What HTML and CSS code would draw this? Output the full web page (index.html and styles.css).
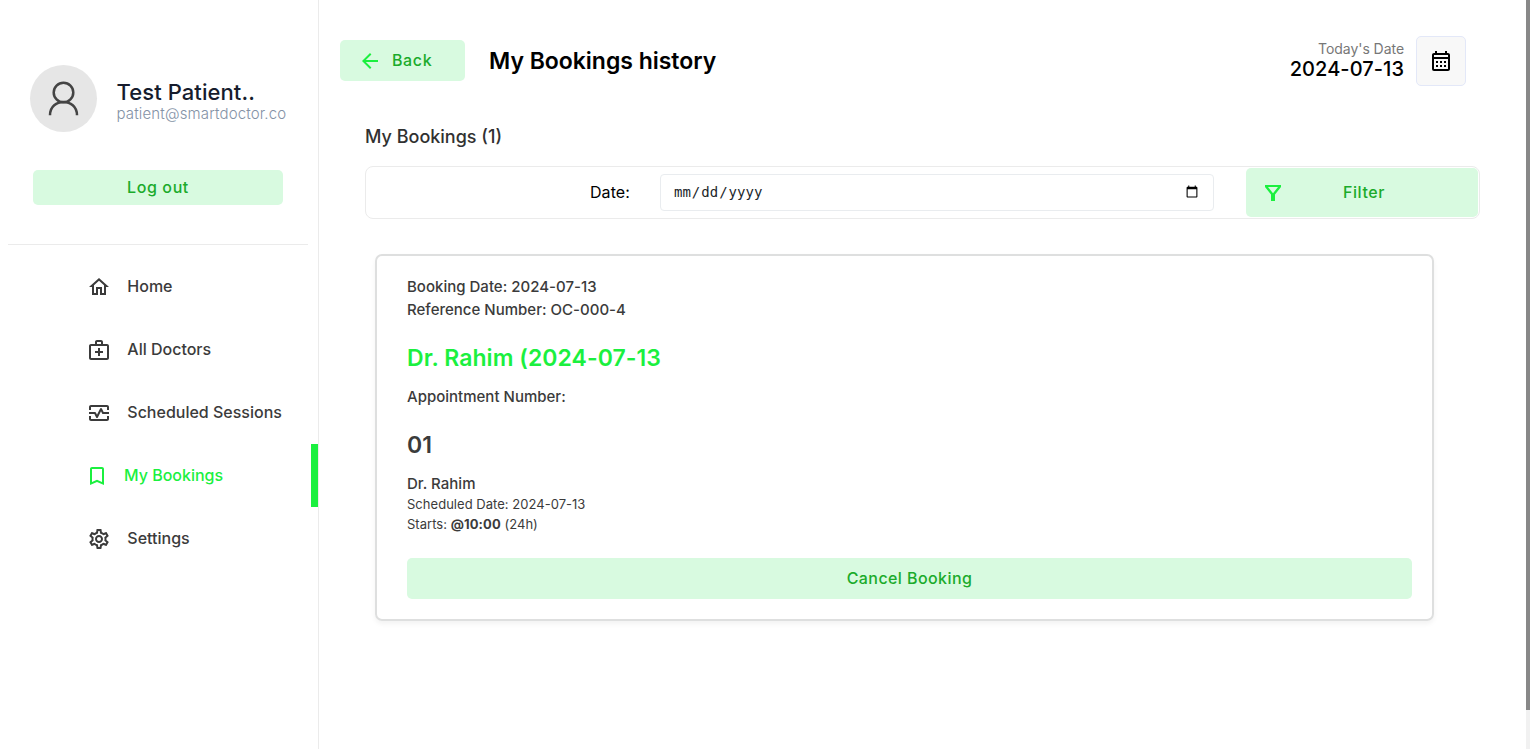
FILE: index.html
```html
<!DOCTYPE html>
<html lang="en">
<head>
<meta charset="utf-8">
<title>My Bookings</title>
<link rel="stylesheet" href="styles.css">
</head>
<body>
<div class="app">
  <aside class="sidebar">
    <div class="profile">
      <div class="avatar">
        <svg width="67" height="67" viewBox="0 0 67 67" fill="none" stroke="#444" stroke-width="2.5"><circle cx="33.5" cy="27.5" r="9.8"/><path d="M20 50.2C20 32.500 47 32.500 47 50.2"/></svg>
      </div>
      <div class="who"><p class="name">Test Patient..</p><p class="email">patient@smartdoctor.co</p></div>
    </div>
    <button class="btn logout">Log out</button>
    <hr class="divider">
    <nav class="menu">
      <a class="item"><svg class="icon" viewBox="0 0 24 24"><path d="M12 5.69l5 4.5V18h-2v-6H9v6H7v-7.81l5-4.5M12 3L2 12h3v8h6v-6h2v6h6v-8h3L12 3z"/></svg><span class="label">Home</span></a>
      <a class="item"><svg class="icon" viewBox="0 0 24 24"><path d="M20 6h-4V4c0-1.1-.9-2-2-2h-4c-1.1 0-2 .9-2 2v2H4c-1.1 0-2 .9-2 2v12c0 1.1.9 2 2 2h16c1.1 0 2-.9 2-2V8c0-1.1-.9-2-2-2zM10 4h4v2h-4V4zm10 16H4V8h16v12zM13 10h-2v3H8v2h3v3h2v-3h3v-2h-3z"/></svg><span class="label">All Doctors</span></a>
      <a class="item"><svg class="icon" viewBox="0 0 24 24"><path d="M20 4H4c-1.1 0-2 .9-2 2v3h2V6h16v3h2V6c0-1.1-.9-2-2-2zM20 18H4v-3H2v3c0 1.1.9 2 2 2h16c1.1 0 2-.9 2-2v-3h-2v3zM14.89 7.55c-.34-.68-1.45-.68-1.79 0L10 13.76l-1.11-2.21A.988.988 0 0 0 8 11H2v2h5.38l1.72 3.45c.18.34.52.55.9.55s.72-.21.89-.55L14 10.24l1.11 2.21c.17.34.51.55.89.55h6v-2h-5.38l-1.73-3.45z"/></svg><span class="label">Scheduled Sessions</span></a>
      <a class="item active"><svg class="icon" viewBox="0 0 24 24"><path d="M17 3H7c-1.1 0-2 .9-2 2v16l7-3 7 3V5c0-1.1-.9-2-2-2zm0 15l-5-2.18L7 18V5h10v13z"/></svg><span class="label">My Bookings</span></a>
      <a class="item"><svg class="icon" viewBox="0 0 24 24"><path d="M19.43 12.98c.04-.32.07-.64.07-.98 0-.34-.03-.66-.07-.98l2.11-1.65c.19-.15.24-.42.12-.64l-2-3.46c-.09-.16-.26-.25-.44-.25-.06 0-.12.01-.17.03l-2.49 1c-.52-.4-1.08-.73-1.69-.98l-.38-2.65C14.46 2.18 14.25 2 14 2h-4c-.25 0-.46.18-.49.42l-.38 2.65c-.61.25-1.17.59-1.69.98l-2.49-1c-.06-.02-.12-.03-.18-.03-.17 0-.34.09-.43.25l-2 3.46c-.13.22-.07.49.12.64l2.11 1.65c-.04.32-.07.65-.07.98 0 .33.03.66.07.98l-2.11 1.65c-.19.15-.24.42-.12.64l2 3.46c.09.16.26.25.44.25.06 0 .12-.01.17-.03l2.49-1c.52.4 1.08.73 1.69.98l.38 2.65c.03.24.24.42.49.42h4c.25 0 .46-.18.49-.42l.38-2.65c.61-.25 1.17-.59 1.69-.98l2.49 1c.06.02.12.03.18.03.17 0 .34-.09.43-.25l2-3.46c.12-.22.07-.49-.12-.64l-2.11-1.65zm-1.98-1.71c.04.31.05.52.05.73 0 .21-.02.43-.05.73l-.14 1.13.89.7 1.08.84-.7 1.21-1.27-.51-1.04-.42-.9.68c-.43.32-.84.56-1.25.73l-1.06.43-.16 1.13-.2 1.35h-1.4l-.19-1.35-.16-1.13-1.06-.43c-.43-.18-.83-.41-1.23-.71l-.91-.7-1.06.43-1.27.51-.7-1.21 1.08-.84.89-.7-.14-1.13c-.03-.31-.05-.54-.05-.74s.02-.43.05-.73l.14-1.13-.89-.7-1.08-.84.7-1.21 1.27.51 1.04.42.9-.68c.43-.32.84-.56 1.25-.73l1.06-.43.16-1.13.2-1.35h1.39l.19 1.35.16 1.13 1.06.43c.43.18.83.41 1.23.71l.91.7 1.06-.43 1.27-.51.7 1.21-1.07.85-.89.7.14 1.13zM12 8c-2.21 0-4 1.79-4 4s1.79 4 4 4 4-1.79 4-4-1.79-4-4-4zm0 6c-1.1 0-2-.9-2-2s.9-2 2-2 2 .9 2 2-.9 2-2 2z"/></svg><span class="label">Settings</span></a>
    </nav>
  </aside>
  <main class="main">
    <header class="top">
      <button class="btn back"><svg class="icon" viewBox="0 0 24 24"><path d="M20 11H7.83l5.59-5.59L12 4l-8 8 8 8 1.41-1.41L7.83 13H20v-2z"/></svg><span class="label">Back</span></button>
      <h1 class="title">My Bookings history</h1>
      <div class="today"><p class="today-label">Today's Date</p><p class="today-date">2024-07-13</p></div>
      <button class="calendar"><svg class="icon" viewBox="0 0 24 24"><path d="M19 4h-1V2h-2v2H8V2H6v2H5c-1.11 0-1.99.9-1.99 2L3 20a2 2 0 0 0 2 2h14c1.1 0 2-.9 2-2V6c0-1.1-.9-2-2-2zm0 16H5V10h14v10zm0-12H5V6h14v2zM9 14H7v-2h2v2zm4 0h-2v-2h2v2zm4 0h-2v-2h2v2zm-8 4H7v-2h2v2zm4 0h-2v-2h2v2zm4 0h-2v-2h2v2z"/></svg></button>
    </header>
    <h2 class="count">My Bookings (1)</h2>
    <form class="filters">
      <label class="date-label" for="date">Date:</label>
      <input class="date" id="date" type="date">
      <button class="btn filter" type="button"><svg class="icon" viewBox="0 0 24 24"><path d="M4 4h16v2l-6 7.5V20h-4v-6.500L4 6zM7 6l5 6.300L17 6z" fill-rule="evenodd"/></svg><span class="filter-text">Filter</span></button>
    </form>
    <section class="card">
      <p class="line">Booking Date: 2024-07-13</p>
      <p class="line">Reference Number: OC-000-4</p>
      <p class="doctor">Dr. Rahim (2024-07-13</p>
      <p class="line">Appointment Number:</p>
      <p class="number">01</p>
      <p class="line">Dr. Rahim</p>
      <div class="times">
        <p class="small">Scheduled Date: 2024-07-13</p>
        <p class="small">Starts: <b>@10:00</b> (24h)</p>
      </div>
      <button class="btn cancel">Cancel Booking</button>
    </section>
  </main>
  <div class="scroll"><div class="thumb"></div></div>
</div>
</body>
</html>
```
FILE: styles.css
```css
* { box-sizing: border-box; }
body { margin: 0; background: #fff; font-family: Inter, sans-serif; color: #3b3b3b; overflow: hidden; }
p, h1, h2 { margin: 0; }
.app { display: flex; height: 749px; }
.icon { display: block; width: 24px; height: 24px; fill: currentColor; flex: none; }
.label { padding-bottom: 2px; }
.btn { border: 0; border-radius: 5px; background: #d8fae0; color: #1bab2b; font: 500 16px/20px Inter, sans-serif; letter-spacing: .6px; padding: 0; }

.sidebar { width: 319px; flex: none; border-right: 1px solid #ebebeb; padding-top: 65px; }
.profile { display: flex; padding-left: 30px; height: 67px; }
.avatar { width: 67px; height: 67px; border-radius: 50%; background: #e6e6e6; flex: none; }
.avatar svg { display: block; }
.who { padding: 14px 0 0 19.5px; }
.name { font-size: 22px; line-height: 26px; font-weight: 500; color: #161c2d; letter-spacing: .08px; }
.email { font-size: 15px; line-height: 18px; font-weight: 300; color: #8492a6; white-space: nowrap; letter-spacing: .15px; }
.logout { display: block; width: 250px; height: 35px; margin: 38px 0 0 33px; padding-bottom: 2px; }
.divider { height: 1px; border: 0; background: #ebebeb; margin: 39px 10px 10px 8px; }
.menu { padding-left: 8px; }
.item { display: flex; align-items: center; height: 63px; padding-left: 79px; gap: 16.3px; font-size: 16px; font-weight: 500; white-space: nowrap; }
.active { color: #1bf03f; padding-left: 77px; gap: 15px; border-right: 7px solid #1bf03f; }

.main { width: 1207px; flex: none; padding-top: 36px; }
.top { display: flex; height: 50px; align-items: center; padding: 0 60px 0 21px; }
.back { width: 125px; height: 41px; margin-bottom: 1px; display: flex; align-items: center; padding-left: 18px; gap: 10px; }
.back .label { padding-bottom: 1px; }
.back .icon, .filter .icon { color: #1bf03f; }
.title { font-size: 23px; line-height: 28px; font-weight: 600; color: #000; margin-left: 24px; letter-spacing: -.02px; }
.today { margin-left: auto; text-align: right; padding-bottom: 1px; }
.today-label { font-size: 14px; line-height: 17px; color: #777; letter-spacing: -.05px; }
.today-date { font-size: 20px; line-height: 24px; font-weight: 500; color: #000; letter-spacing: .06px; }
.calendar { width: 50px; height: 50px; margin-left: 12px; border: 1px solid #e3e8f8; border-radius: 5px; background: #f8f8f8; color: #000; display: flex; align-items: center; justify-content: center; padding: 0; }
.count { margin: 40px 0 0 46px; font-size: 18px; line-height: 22px; font-weight: 500; color: #313131; }
.filters { display: flex; align-items: center; width: 1115px; height: 53px; margin: 18px 0 0 46px; border: 1px solid #ebebeb; border-radius: 8px; padding-right: 1px; }
.date-label { width: 264px; text-align: right; font-size: 16px; color: #000; padding-bottom: 2px; letter-spacing: .1px; }
.date { width: 554px; height: 37px; margin-left: 30px; border: 1px solid #e9ecef; border-radius: 4px; padding: 0 12px 2px; background: #fff; color: #212529; font: 14px monospace; }
.filter { width: 232px; height: 49px; margin: 0 0 1px auto; display: flex; align-items: center; padding-left: 15px; }
.filter .icon { margin-top: 1px; }
.filter-text { flex: 1; padding: 0 55px 1px 0; text-align: center; margin-left: 20px; }
.card { width: 1059px; height: 367px; margin: 35px 0 0 56px; border: 2px solid #dedfdf; border-radius: 7px; box-shadow: 0 3px 5px rgba(0,0,0,.05); padding: 19px 20px 0 30px; }
.line { font-size: 15px; line-height: 23px; font-weight: 500; letter-spacing: .01px; }
.doctor, .number { font-size: 23px; line-height: 28px; font-weight: 600; margin: 23px 0 13px; }
.doctor { color: #1bf03f; letter-spacing: .06px; }
.times { padding-bottom: 1px; margin-top: -1px; }
.small { font-size: 13px; line-height: 20px; letter-spacing: .03px; }
.small b { letter-spacing: .1px; }
.cancel { width: 100%; height: 41px; margin-top: 23px; padding-bottom: 2px; display: block; letter-spacing: .42px; }
.scroll { width: 4px; flex: none; background: #f1f1f1; }
.thumb { height: 710px; background: #888; }
```
